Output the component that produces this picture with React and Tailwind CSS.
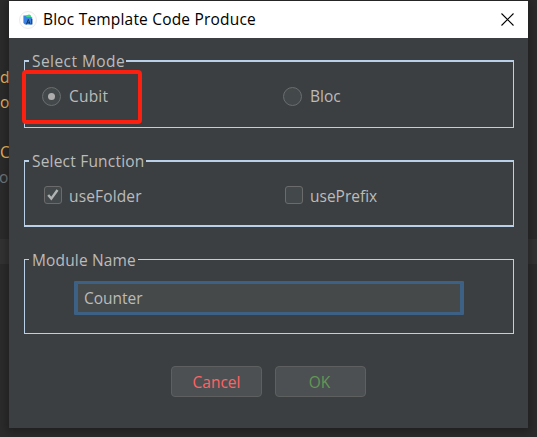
import React from 'react';

function Group({ title, titleClass, className, lineClass, children }) {
  return (
    <section className={`relative w-[490px] shrink-0 border-[#b9d0e8] ${className}`}>
      <h2 className={`absolute left-[4px] whitespace-nowrap bg-[#3c3f41] pl-[3px] leading-[20px] ${lineClass} ${titleClass}`}>
        {title}
      </h2>
      {children}
    </section>
  );
}

function Radio({ label, checked, labelClass }) {
  return (
    <label className="flex items-center gap-[8px]">
      <span className="flex h-[19px] w-[19px] items-center justify-center rounded-full border border-[#6b6d6e] bg-[#43494a]">
        {checked && <span className="h-[7px] w-[7px] rounded-full bg-[#adadad]" />}
      </span>
      <span className={`leading-[20px] ${labelClass}`}>{label}</span>
    </label>
  );
}

function Check({ label, checked, labelClass }) {
  return (
    <label className="flex items-center gap-[8px]">
      <span className="mb-[2px] flex h-[18px] w-[18px] items-center justify-center rounded-[3px] border border-[#6b6b6b] bg-[#43494a]">
        {checked && (
          <svg width="12" height="12" viewBox="0 0 12 12" fill="none" stroke="#b0b2b3" strokeWidth="2.4">
            <path d="M1.2 6 4.3 9.6 10.5 1" />
          </svg>
        )}
      </span>
      <span className={`leading-[20px] ${labelClass}`}>{label}</span>
    </label>
  );
}

function StudioIcon() {
  return (
    <svg width="18" height="18" viewBox="0 0 18 18">
      <circle cx="9" cy="9" r="8.5" fill="#fdfdfd" stroke="#e2e2e2" strokeWidth=".7" />
      <path d="M6.5 5.2Q7 3.6 8.5 4L10 3.4Q12.3 3.3 12.3 6v2H7z" fill="#3ddc84" />
      <path d="M4.4 4.6h2.4l.8 1.6h5.6V13.4H6L4.4 12z" fill="#3b82e6" />
      <path d="m7.4 13.4 1.9-5 1.9 5M8.2 11.8h2.3M12.8 8v5.4" fill="none" stroke="#12355e" strokeWidth="1" />
    </svg>
  );
}

export default function App() {
  return (
    <div className="relative flex h-[437px] w-[537px] overflow-hidden bg-[#2b2b2b] pl-[9px] pt-px font-['Open_Sans','Noto_Sans',sans-serif] text-[15.5px] text-[#bbbbbb]">
      <div className="absolute left-0 top-[239px] h-[25px] w-[537px] bg-[#323232]" />
      <span className="absolute left-0 top-[67px] leading-[20px] text-[#e8b45c]">d</span>
      <span className="absolute left-0 top-[92px] leading-[20px] text-[#e8b45c]">o</span>
      <span className="absolute left-0 top-[142px] leading-[20px] text-[#e8b45c]">C</span>
      <span className="absolute left-[-1px] top-[167px] leading-[20px] text-[#70757a]">o</span>

      <main className="relative flex h-[427px] w-[519px] flex-col bg-[#3c3f41] shadow-[0_2px_8px_2px_rgba(0,0,0,0.28)]">
        <header className="flex h-[37px] shrink-0 items-center bg-white pl-[10px] pr-[14px] text-black">
          <StudioIcon />
          <h1 className="ml-[6px] whitespace-nowrap tracking-[0.19px]">Bloc Template Code Produce</h1>
          <svg className="ml-auto" width="13" height="13" viewBox="0 0 13 13" stroke="#000" strokeWidth="1.1">
            <path d="m.5.5 12 12m0-12-12 12" />
          </svg>
        </header>

        <div className="flex flex-1 flex-col pl-[15px] pt-[22px]">
          <Group title="Select Mode" className="h-[68px] border border-t-2" lineClass="top-[-11px]" titleClass="w-[97px] tracking-[0.45px]">
            <div className="flex pl-[17px] pt-[24px]">
              <div className="w-[241px]"><Radio label="Cubit" checked labelClass="tracking-[0.2px]" /></div>
              <Radio label="Bloc" />
            </div>
            <div className="absolute left-[-3px] top-[8px] h-[54px] w-[120px] rounded-[4px] border-4 border-[#fb2010]" />
          </Group>

          <Group title="Select Function" className="mt-[32px] h-[67px] border border-y-2" lineClass="top-[-11px]" titleClass="w-[117px] tracking-[0.2px]">
            <div className="flex pl-[19px] pt-[24px]">
              <div className="w-[241px]"><Check label="useFolder" checked labelClass="ml-[-1px] tracking-[0.15px]" /></div>
              <Check label="usePrefix" labelClass="ml-[-1px]" />
            </div>
          </Group>

          <Group title="Module Name" className="mt-[32px] h-[75px] border" lineClass="top-[-10px]" titleClass="w-[109px] tracking-[0.15px]">
            <div className="ml-[49px] mt-[21px] flex h-[34px] w-[390px] items-center rounded-[1px] border-x-4 border-y-[3px] border-[#3d6185] bg-[#45494a] pl-[6px] pt-[2px]">
              Counter
            </div>
          </Group>

          <div className="ml-[147px] mt-[32px] flex gap-[13px]">
            <button className="h-[31px] w-[91px] rounded-[4px] border border-[#5e6060] bg-[#4c5052] pt-[2px] text-[#ff6464]">Cancel</button>
            <button className="h-[31px] w-[91px] rounded-[4px] border border-[#5e6060] bg-[#4c5052] pr-[2px] pt-[2px] text-[#629755]">OK</button>
          </div>
        </div>
      </main>
    </div>
  );
}
